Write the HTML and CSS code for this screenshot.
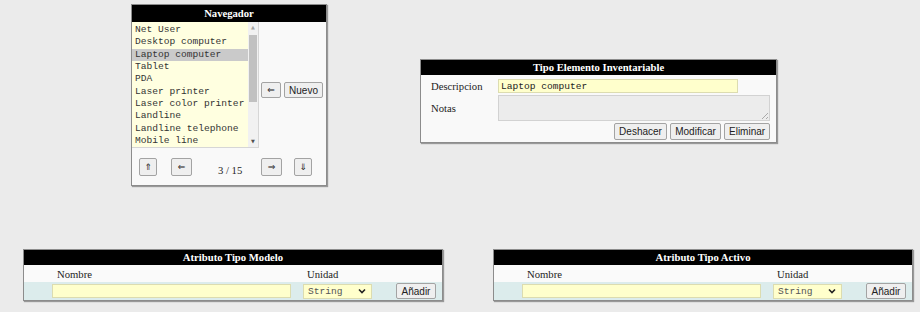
FILE: index.html
```html
<!DOCTYPE html>
<html lang="es">
<head>
    <meta charset="UTF-8">
    <title>Tipo Elemento Inventariable</title>
    <link rel="stylesheet" href="styles.css">
</head>
<body>
    <div class="row row-top">
        <!-- Navegador -->
        <section class="panel nav-panel">
            <h2 class="panel-title nav-title">Navegador</h2>
            <div class="nav-body">
                <div class="listbox">
                    <ul class="list-items">
                        <li>Net User</li>
                        <li>Desktop computer</li>
                        <li class="selected">Laptop computer</li>
                        <li>Tablet</li>
                        <li>PDA</li>
                        <li>Laser printer</li>
                        <li>Laser color printer</li>
                        <li>Landline</li>
                        <li>Landline telephone</li>
                        <li>Mobile line</li>
                    </ul>
                    <div class="scrollbar">
                        <span class="sb-arrow">&#9650;</span>
                        <div class="sb-track"><div class="sb-thumb"></div></div>
                        <span class="sb-arrow">&#9660;</span>
                    </div>
                </div>
                <div class="nav-side">
                    <button class="button arrow side-back">&#8656;</button>
                    <button class="button side-new">Nuevo</button>
                </div>
            </div>
            <div class="nav-pager">
                <button class="button arrow pg-first">&#8657;</button>
                <button class="button arrow pg-prev">&#8656;</button>
                <span class="pg-count">3 / 15</span>
                <button class="button arrow pg-next">&#8658;</button>
                <button class="button arrow pg-last">&#8659;</button>
            </div>
        </section>

        <!-- Tipo Elemento Inventariable -->
        <section class="panel tipo-panel">
            <h2 class="panel-title">Tipo Elemento Inventariable</h2>
            <div class="tipo-body">
                <div class="form-row">
                    <label class="form-label">Descripcion</label>
                    <input class="field desc-field" type="text" value="Laptop computer">
                </div>
                <div class="form-row">
                    <label class="form-label">Notas</label>
                    <div class="notes-field"><span class="grip"></span></div>
                </div>
                <div class="button-group">
                    <button class="button btn-undo">Deshacer</button>
                    <button class="button btn-edit">Modificar</button>
                    <button class="button btn-del">Eliminar</button>
                </div>
            </div>
        </section>
    </div>

    <div class="row row-bottom">
        <section class="panel attr-panel">
            <h2 class="panel-title">Atributo Tipo Modelo</h2>
            <div class="attr-head">
                <span class="attr-name">Nombre</span>
                <span class="attr-unit">Unidad</span>
            </div>
            <div class="attr-row">
                <input class="field attr-field" type="text">
                <div class="unit-select">String
                    <svg width="8" height="6" viewBox="0 0 8 6"><path d="M1 1.5 L4 4.5 L7 1.5" fill="none" stroke="#222" stroke-width="1.6"/></svg>
                </div>
                <button class="button btn-add">Añadir</button>
            </div>
        </section>

        <section class="panel attr-panel">
            <h2 class="panel-title">Atributo Tipo Activo</h2>
            <div class="attr-head">
                <span class="attr-name">Nombre</span>
                <span class="attr-unit">Unidad</span>
            </div>
            <div class="attr-row">
                <input class="field attr-field" type="text">
                <div class="unit-select">String
                    <svg width="8" height="6" viewBox="0 0 8 6"><path d="M1 1.5 L4 4.5 L7 1.5" fill="none" stroke="#222" stroke-width="1.6"/></svg>
                </div>
                <button class="button btn-add">Añadir</button>
            </div>
        </section>
    </div>
</body>
</html>
```

FILE: styles.css
```css
:root {
    --page-bg: #ebebeb;
    --panel-bg: #f9f9f9;
    --panel-border: #8c8c8c;
    --list-bg: #ffffe0;
    --field-bg: #ffffcc;
    --row-bg: #dcecec;
    --text: #222;
    --serif: "Liberation Serif", "Times New Roman", serif;
    --sans: "Liberation Sans", Arial, sans-serif;
    --mono: "Liberation Mono", "Courier New", monospace;
}

* {
    margin: 0;
    padding: 0;
    box-sizing: border-box;
}

body {
    background: var(--page-bg);
    color: var(--text);
    font-family: var(--serif);
    font-size: 10.67px;
    width: 920px;
    height: 312px;
    overflow: hidden;
}

.row {
    display: flex;
    align-items: flex-start;
}

.row-top {
    padding: 4px 0 0 131px;
}

.row-bottom {
    margin-top: 63px;
    padding-left: 23px;
    gap: 50px;
}

.panel {
    background: var(--panel-bg);
    border: 1px solid var(--panel-border);
    box-shadow: 1px 1px 1px rgba(0, 0, 0, 0.35);
}

.panel-title {
    background: #000;
    color: #fff;
    font-size: 10.67px;
    font-weight: bold;
    text-align: center;
    height: 15px;
    line-height: 15px;
}

/* Navegador */
.nav-panel {
    width: 196px;
    height: 182px;
}

.nav-title {
    height: 17px;
    line-height: 17px;
}

.nav-body {
    display: flex;
    align-items: flex-start;
}

.listbox {
    display: flex;
    width: 127px;
    height: 126px;
    background: var(--list-bg);
    border-right: 1px solid #d6d6d6;
    border-bottom: 1px solid #d6d6d6;
    overflow: hidden;
}

.list-items {
    list-style: none;
    flex: 1;
    padding-top: 2px;
    font-family: var(--mono);
    font-size: 9.6px;
    line-height: 12.33px;
    color: #333;
}

.list-items li {
    padding-left: 3px;
    white-space: nowrap;
}

.list-items li.selected {
    background: #cacaca;
}

.scrollbar {
    width: 10px;
    background: #f1f1f1;
    display: flex;
    flex-direction: column;
    align-items: center;
}

.sb-arrow {
    height: 11px;
    font-family: "DejaVu Sans", sans-serif;
    font-size: 5px;
    line-height: 11px;
    color: #505050;
}

.sb-arrow:first-child {
    color: #a3a3a3;
}

.sb-track {
    flex: 1;
    width: 100%;
    padding-top: 2px;
}

.sb-thumb {
    height: 67px;
    margin: 0 1px;
    background: #c1c1c1;
}

.nav-side {
    display: flex;
    gap: 3px;
    margin: 60px 0 0 2px;
}

.button {
    font-family: var(--sans);
    font-size: 10px;
    color: var(--text);
    background: #efefef;
    border: 1px solid #a3a3a3;
    border-radius: 2px;
    height: 17px;
    line-height: 15px;
    padding: 0 4px;
}

.button.arrow {
    font-family: "DejaVu Sans", sans-serif;
    font-size: 9px;
    padding: 0;
}

.side-back {
    width: 20px;
    height: 16px;
}

.side-new {
    width: 39px;
    height: 16px;
}

.nav-pager {
    display: flex;
    align-items: center;
    margin-top: 10px;
    padding-left: 7px;
}

.nav-pager .button {
    height: 18px;
}

.pg-first,
.pg-last {
    width: 18px;
}

.pg-prev,
.pg-next {
    width: 21px;
}

.pg-prev {
    margin-left: 14px;
}

.pg-count {
    width: 26px;
    margin: 5px 0 0 26px;
    white-space: nowrap;
}

.pg-next {
    margin-left: 17px;
}

.pg-last {
    margin-left: 12px;
}

/* Tipo Elemento Inventariable */
.tipo-panel {
    width: 357px;
    height: 84px;
    margin: 55px 0 0 93px;
}

.tipo-body {
    padding: 4px 6px 0 10px;
}

.form-row {
    display: flex;
    align-items: center;
    margin-bottom: 2px;
}

.form-label {
    width: 67px;
}

.field {
    font-family: var(--mono);
    font-size: 9.6px;
    color: var(--text);
    background: var(--field-bg);
    border: 1px solid #dcdcb0;
    height: 14px;
    padding: 0 2px;
    outline: none;
}

.desc-field {
    width: 240px;
}

.notes-field {
    position: relative;
    width: 272px;
    height: 26px;
    background: #ececec;
    border: 1px solid #d2d2d2;
}

.grip {
    position: absolute;
    right: 1px;
    bottom: 1px;
    width: 6px;
    height: 6px;
    background: linear-gradient(135deg, transparent 45%, #aaa 45%, #aaa 55%, transparent 55%, transparent 75%, #aaa 75%, #aaa 85%, transparent 85%);
}

.button-group {
    display: flex;
    justify-content: flex-end;
    gap: 3px;
    margin-top: 1px;
}

.btn-undo {
    width: 53px;
}

.btn-edit {
    width: 51px;
}

.btn-del {
    width: 46px;
}

/* Atributos */
.attr-panel {
    width: 420px;
    height: 52px;
}

.attr-head,
.attr-row {
    display: grid;
    grid-template-columns: 28px 251px 93px 40px;
    align-items: center;
}

.attr-head {
    height: 17px;
    background: #fafafa;
}

.attr-name {
    grid-column: 2;
    padding-left: 5px;
}

.attr-unit {
    grid-column: 3;
    padding-left: 4px;
}

.attr-row {
    height: 18px;
    background: var(--row-bg);
}

.attr-field {
    grid-column: 2;
    width: 239px;
}

.unit-select {
    display: flex;
    align-items: center;
    justify-content: space-between;
    width: 69px;
    height: 15px;
    padding: 0 5px 0 4px;
    background: var(--field-bg);
    border: 1px solid #dcdcb0;
    font-family: var(--mono);
    font-size: 9.6px;
    color: #555;
}

.btn-add {
    width: 40px;
    height: 16px;
}
```
